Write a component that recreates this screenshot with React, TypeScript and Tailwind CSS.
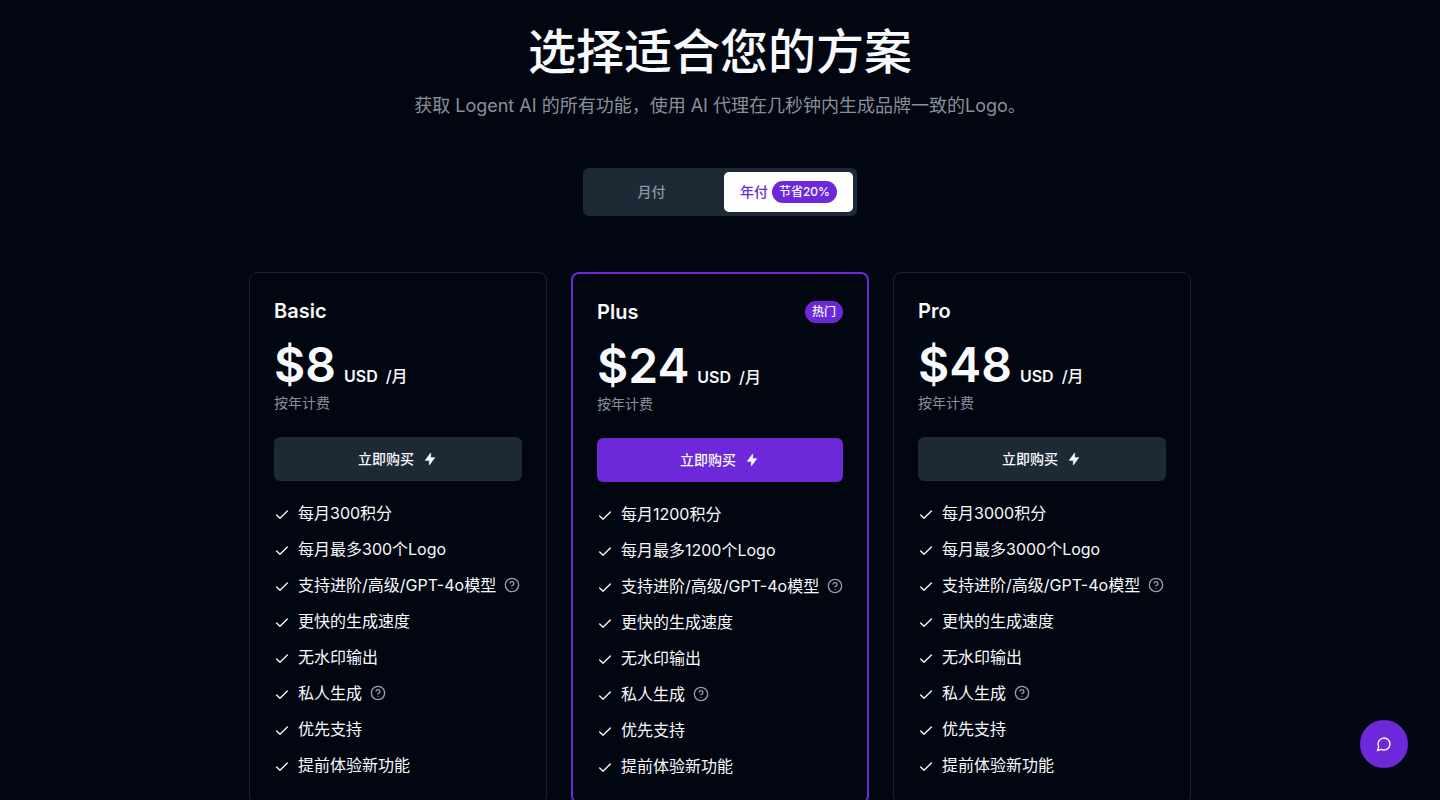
import React from "react";
import { Check, CircleHelp } from "lucide-react";

type Plan = {
  name: string;
  price: string;
  credits: number;
  popular?: boolean;
};

type Feature = { label: string; help?: boolean };

const plans: Plan[] = [
  { name: "Basic", price: "$8", credits: 300 },
  { name: "Plus", price: "$24", credits: 1200, popular: true },
  { name: "Pro", price: "$48", credits: 3000 },
];

function featuresFor(credits: number): Feature[] {
  return [
    { label: `每月${credits}积分` },
    { label: `每月最多${credits}个Logo` },
    { label: "支持进阶/高级/GPT-4o模型", help: true },
    { label: "更快的生成速度" },
    { label: "无水印输出" },
    { label: "私人生成", help: true },
    { label: "优先支持" },
    { label: "提前体验新功能" },
  ];
}

function Bolt() {
  return (
    <svg
      viewBox="0 0 24 24"
      fill="currentColor"
      stroke="currentColor"
      strokeWidth="1"
      strokeLinejoin="round"
      className="size-4"
      aria-hidden="true"
    >
      <path d="M13 3v7h6l-8 11v-7H5z" />
    </svg>
  );
}

function ChatBubble() {
  return (
    <svg
      viewBox="0 0 24 24"
      fill="none"
      stroke="currentColor"
      strokeWidth="2"
      strokeLinecap="round"
      strokeLinejoin="round"
      className="size-4"
      aria-hidden="true"
    >
      <path d="M7.9 20A9 9 0 1 0 4 16.1L2 22Z" />
    </svg>
  );
}

function PlanCard({ plan }: { plan: Plan }) {
  const border = plan.popular ? "border-2 border-[#6d28d9]" : "border border-[#1f2330]";
  const action = plan.popular ? "bg-[#6d28d9]" : "bg-[#1e2936]";
  return (
    <section className={`flex flex-col rounded-lg p-6 ${border}`}>
      <div className="flex h-7 items-center justify-between">
        <h2 className="text-xl font-semibold">{plan.name}</h2>
        {plan.popular && (
          <span className="rounded-full bg-[#6d28d9] px-[7px] py-[3px] text-xs font-medium">热门</span>
        )}
      </div>
      <p className="mt-4 flex items-baseline gap-2 font-medium">
        <span className="text-5xl font-semibold">{plan.price}</span>
        <span className="font-semibold">USD</span>
        <span>/月</span>
      </p>
      <p className="mt-1 text-sm text-[#8b8f9a]">按年计费</p>
      <button
        type="button"
        className={`mt-6 flex h-11 items-center justify-center gap-2 rounded-md text-sm font-medium ${action}`}
      >
        立即购买
        <Bolt />
      </button>
      <ul className="mt-5 flex flex-col gap-3">
        {featuresFor(plan.credits).map((feature) => (
          <li key={feature.label} className="flex items-center gap-2 whitespace-nowrap">
            <Check className="mt-1 size-4 shrink-0" strokeWidth={2} aria-hidden="true" />
            <span>{feature.label}</span>
            {feature.help && (
              <button type="button" aria-label="说明" className="text-[#9a9ea9]">
                <CircleHelp className="size-4" />
              </button>
            )}
          </li>
        ))}
      </ul>
    </section>
  );
}

export default function App() {
  return (
    <div className="min-h-screen bg-[#020611] font-['Inter','Noto_Sans_CJK_SC',sans-serif] text-[#f8fafc]">
      <main className="mx-auto flex max-w-[942px] flex-col pt-7">
        <header className="text-center">
          <h1 className="text-5xl font-medium">选择适合您的方案</h1>
          <p className="mt-4 text-lg text-[#8b8f9a]">
            获取 Logent AI 的所有功能，使用 AI 代理在几秒钟内生成品牌一致的Logo。
          </p>
        </header>
        <div className="mt-12 flex h-12 gap-2 self-center rounded-md bg-[#1e2936] p-1 text-sm font-medium">
          <button type="button" className="w-[129px] text-[#8b95a5]">
            月付
          </button>
          <button
            type="button"
            aria-pressed="true"
            className="flex items-center gap-1 rounded-[5px] bg-white px-4 text-[#6d28d9]"
          >
            年付
            <span className="rounded-full bg-[#6d28d9] px-[7px] py-[3px] text-xs font-medium text-[#f8fafc]">
              节省20%
            </span>
          </button>
        </div>
        <div className="mt-14 grid grid-cols-3 gap-6">
          {plans.map((plan) => (
            <PlanCard key={plan.name} plan={plan} />
          ))}
        </div>
      </main>
      <button
        type="button"
        aria-label="聊天"
        className="fixed right-8 bottom-8 flex size-12 items-center justify-center rounded-full bg-[#6d28d9]"
      >
        <ChatBubble />
      </button>
    </div>
  );
}
